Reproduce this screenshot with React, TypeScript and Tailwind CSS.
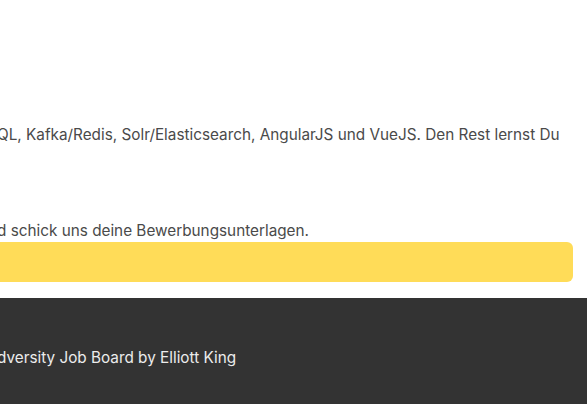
// Job posting page, scrolled so its left side falls outside the window.
const hidden = "inline-block w-[557px] overflow-hidden whitespace-nowrap text-right align-top";

function Line({ prefix, children }: { prefix?: string; children?: React.ReactNode }) {
  return (
    <div className="h-6 whitespace-nowrap">
      <span className={hidden}>{prefix}</span>
      {children}
    </div>
  );
}

export default function App() {
  return (
    <div
      className="w-full h-[404px] overflow-hidden bg-white text-[#4a4a4a]"
      style={{ fontFamily: "Inter, 'Noto Sans', sans-serif" }}
    >
      {/* Main column */}
      <main className="-ml-[560px] w-[1133px] text-[15.3px] leading-6">
        <div className="pt-[123px]">
          <Line prefix="Du kennst dich aus mit PHP, Symfony, MySQL/PostgreS">
            QL, Kafka/Redis, Solr/Elasticsearch, AngularJS und VueJS. Den Rest lernst Du
          </Line>
          <Line prefix="bei uns." />
          <Line />
          <Line prefix="Bewirb dich!" />
          <Line prefix="Interesse? Dann melde dich un">
            d schick uns deine Bewerbungsunterlagen.
          </Line>
        </div>
        <button className="w-full h-10 -mt-px rounded-md bg-[#ffdc58] text-left text-[#333] font-semibold pl-4">
          Jetzt bewerben
        </button>
      </main>

      {/* Footer */}
      <footer className="mt-4 bg-[#333333] h-[106px] pt-12 text-[#ececec] text-[15.3px] leading-6">
        <div className="whitespace-nowrap -ml-[560px]">
          <span className={hidden}>© 2024 A</span>
          dversity Job Board by Elliott King
        </div>
      </footer>
    </div>
  );
}
